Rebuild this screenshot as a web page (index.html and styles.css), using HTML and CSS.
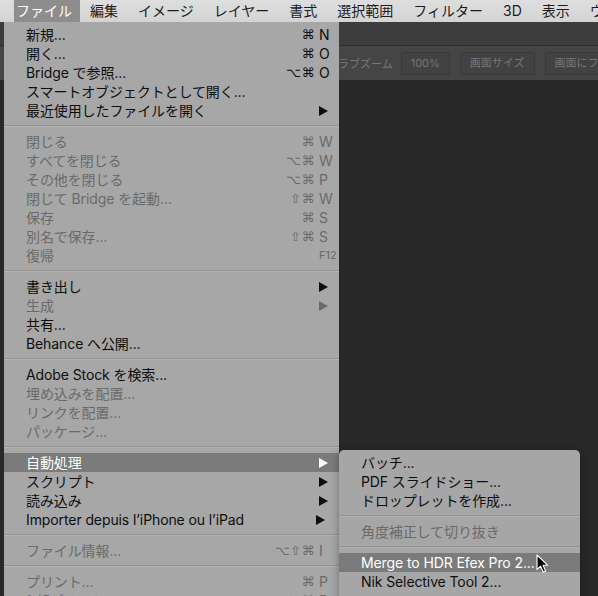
FILE: index.html
```html
<!DOCTYPE html>
<html lang="ja">
<head>
<meta charset="utf-8">
<title>ファイル メニュー</title>
<link rel="stylesheet" href="styles.css">
</head>
<body>
<div class="screen">
  <header class="menubar">
    <span class="mb-item mb-first is-open">ファイル</span>
    <span class="mb-item">編集</span>
    <span class="mb-item">イメージ</span>
    <span class="mb-item">レイヤー</span>
    <span class="mb-item">書式</span>
    <span class="mb-item">選択範囲</span>
    <span class="mb-item">フィルター</span>
    <span class="mb-item">3D</span>
    <span class="mb-item">表示</span>
    <span class="mb-item">ウィンドウ</span>
  </header>

  <div class="ps">
    <div class="apptop"></div>
    <div class="options">
      <span class="opt-label">スクラブズーム</span>
      <span class="opt-btn">100%</span>
      <span class="opt-btn">画面サイズ</span>
      <span class="opt-btn">画面にフィット</span>
    </div>
    <div class="canvas"></div>
  </div>

  <div class="menu file-menu">
    <div class="row"><span class="lbl">新規...</span><span class="mods">⌘</span><span class="key">N</span></div>
    <div class="row"><span class="lbl">開く...</span><span class="mods">⌘</span><span class="key">O</span></div>
    <div class="row"><span class="lbl">Bridge で参照...</span><span class="mods">⌥⌘</span><span class="key">O</span></div>
    <div class="row"><span class="lbl">スマートオブジェクトとして開く...</span></div>
    <div class="row"><span class="lbl">最近使用したファイルを開く</span><span class="mods"></span><span class="key"><svg class="arrow" viewBox="0 0 9 10"><polygon points="0,0 9,5 0,10"/></svg></span></div>
    <div class="sep"></div>
    <div class="row off"><span class="lbl">閉じる</span><span class="mods">⌘</span><span class="key">W</span></div>
    <div class="row off"><span class="lbl">すべてを閉じる</span><span class="mods">⌥⌘</span><span class="key">W</span></div>
    <div class="row off"><span class="lbl">その他を閉じる</span><span class="mods">⌥⌘</span><span class="key">P</span></div>
    <div class="row off"><span class="lbl">閉じて Bridge を起動...</span><span class="mods">⇧⌘</span><span class="key">W</span></div>
    <div class="row off"><span class="lbl">保存</span><span class="mods">⌘</span><span class="key">S</span></div>
    <div class="row off"><span class="lbl">別名で保存...</span><span class="mods">⇧⌘</span><span class="key">S</span></div>
    <div class="row off"><span class="lbl">復帰</span><span class="mods"></span><span class="key key-small">F12</span></div>
    <div class="sep"></div>
    <div class="row"><span class="lbl">書き出し</span><span class="mods"></span><span class="key"><svg class="arrow" viewBox="0 0 9 10"><polygon points="0,0 9,5 0,10"/></svg></span></div>
    <div class="row off"><span class="lbl">生成</span><span class="mods"></span><span class="key"><svg class="arrow" viewBox="0 0 9 10"><polygon points="0,0 9,5 0,10"/></svg></span></div>
    <div class="row"><span class="lbl">共有...</span></div>
    <div class="row"><span class="lbl">Behance へ公開...</span></div>
    <div class="sep"></div>
    <div class="row"><span class="lbl">Adobe Stock を検索...</span></div>
    <div class="row off"><span class="lbl">埋め込みを配置...</span></div>
    <div class="row off"><span class="lbl">リンクを配置...</span></div>
    <div class="row off"><span class="lbl">パッケージ...</span></div>
    <div class="sep"></div>
    <div class="row hl"><span class="lbl">自動処理</span><span class="mods"></span><span class="key"><svg class="arrow" viewBox="0 0 9 10"><polygon points="0,0 9,5 0,10"/></svg></span></div>
    <div class="row"><span class="lbl">スクリプト</span><span class="mods"></span><span class="key"><svg class="arrow" viewBox="0 0 9 10"><polygon points="0,0 9,5 0,10"/></svg></span></div>
    <div class="row"><span class="lbl">読み込み</span><span class="mods"></span><span class="key"><svg class="arrow" viewBox="0 0 9 10"><polygon points="0,0 9,5 0,10"/></svg></span></div>
    <div class="row"><span class="lbl">Importer depuis l’iPhone ou l’iPad</span><span class="mods"></span><span class="key key-shift"><svg class="arrow" viewBox="0 0 9 10"><polygon points="0,0 9,5 0,10"/></svg></span></div>
    <div class="sep"></div>
    <div class="row off"><span class="lbl">ファイル情報...</span><span class="mods">⌥⇧⌘</span><span class="key">I</span></div>
    <div class="sep"></div>
    <div class="row off"><span class="lbl">プリント...</span><span class="mods">⌘</span><span class="key">P</span></div>
    <div class="row off"><span class="lbl">1 部プリント</span><span class="mods">⌥⇧⌘</span><span class="key">P</span></div>
  </div>

  <div class="menu submenu">
    <div class="row"><span class="lbl">バッチ...</span></div>
    <div class="row"><span class="lbl">PDF スライドショー...</span></div>
    <div class="row"><span class="lbl">ドロップレットを作成...</span></div>
    <div class="sep"></div>
    <div class="row off"><span class="lbl">角度補正して切り抜き</span></div>
    <div class="sep"></div>
    <div class="row hl"><span class="lbl">Merge to HDR Efex Pro 2...</span></div>
    <div class="row"><span class="lbl">Nik Selective Tool 2...</span></div>
  </div>

  <svg class="cursor" viewBox="0 0 13 19" width="13" height="19">
    <path d="M1,1 L1,15.5 L4.6,12.2 L7.2,18 L9.6,17 L7.1,11.3 L11.8,11.3 Z" fill="#000" stroke="#fff" stroke-width="1.1" stroke-linejoin="round"/>
  </svg>
</div>
</body>
</html>
```

FILE: styles.css
```css
html, body {
  margin: 0;
  padding: 0;
  background: #282828;
}

body {
  font-family: "Inter", "Noto Sans CJK JP", sans-serif;
  font-size: 14px;
  -webkit-font-smoothing: antialiased;
}

.screen {
  position: relative;
  width: 598px;
  height: 596px;
  overflow: hidden;
  background: #282828;
}

/* ---------- macOS menu bar ---------- */
.menubar {
  height: 22px;
  display: flex;
  align-items: stretch;
  background: linear-gradient(#dedede, #d4d4d4);
  color: #1c1c1c;
  white-space: nowrap;
  line-height: 22px;
}

.mb-item {
  padding: 0 10px;
}

.mb-first {
  margin-left: 14px;
  padding: 0 8px 0 2px;
}

.mb-item.is-open {
  background: #8d8d8d;
  color: #fff;
}

/* ---------- Photoshop window behind ---------- */
.ps {
  display: flex;
  flex-direction: column;
}

.apptop {
  height: 23px;
  background: #3d3d3d;
  border-bottom: 1px solid #2e2e2e;
}

.options {
  height: 34px;
  background: #454545;
  display: flex;
  align-items: center;
  gap: 10px;
  padding-left: 316px;
  font-size: 11px;
  color: #767676;
  white-space: nowrap;
}

.opt-label {
  margin-right: -2px;
}

.opt-btn {
  height: 21px;
  line-height: 21px;
  padding: 0 9px;
  border: 1px solid #3a3a3a;
  border-radius: 2px;
  background: #424242;
}

.canvas {
  height: 600px;
  background: #282828;
}

/* ---------- menus ---------- */
.menu {
  position: absolute;
  background: #a7a7a7;
  color: #0e0e0e;
  padding-top: 3px;
}

.file-menu {
  top: 22px;
  left: 4px;
  width: 335px;
  height: 580px;
}

.submenu {
  top: 450px;
  left: 339px;
  width: 241px;
  height: 160px;
  border-radius: 5px 5px 0 0;
  background: #a6a6a6;
  box-shadow: 0 2px 8px rgba(0, 0, 0, 0.35);
}

.row {
  height: 19px;
  line-height: 19px;
  display: grid;
  grid-template-columns: 1fr auto 14px;
  align-items: center;
  padding: 0 6px 0 22px;
  white-space: nowrap;
}

.row.off {
  color: #6a6a6a;
}

.row.hl {
  background: #7b7b7b;
  color: #ffffff;
}

.lbl {
  letter-spacing: -0.1px;
}

.mods {
  font-family: "DejaVu Sans", sans-serif;
  font-size: 13px;
  line-height: 19px;
  text-align: right;
  padding-right: 4px;
  letter-spacing: 0.5px;
}

.key {
  font-size: 14px;
  line-height: 19px;
  display: flex;
  align-items: center;
}

.key-small {
  font-size: 11px;
}

.key-shift {
  transform: translateX(-3px);
}

.arrow {
  width: 9px;
  height: 10px;
  fill: currentColor;
}

.sep {
  height: 0;
  margin: 5px 0 5px;
  border-top: 1px solid #939393;
  border-bottom: 1px solid #b2b2b2;
}

.cursor {
  position: absolute;
  left: 536px;
  top: 554px;
}
```
